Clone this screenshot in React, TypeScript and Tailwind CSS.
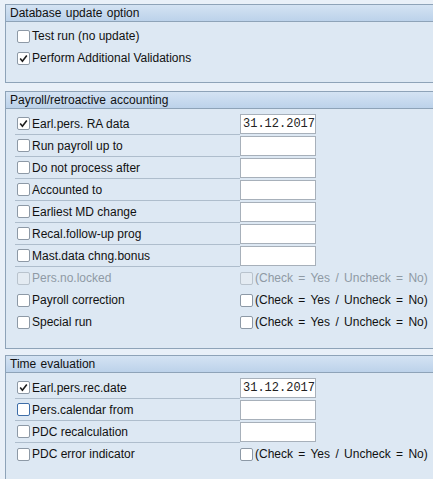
import React from 'react'

type Row = {
  label: string
  checked?: boolean
  disabled?: boolean
  focus?: boolean
  input?: string | null
  flag?: boolean
}

const Check = ({ checked, disabled, focus }: { checked?: boolean; disabled?: boolean; focus?: boolean }) => (
  <span
    className={`flex h-[13px] w-[13px] shrink-0 items-center justify-center rounded-[2px] border ${
      disabled ? 'border-[#b9c3cd] bg-[#e4ebf2]' : focus ? 'border-[#3f6ea8] bg-white' : 'border-[#8d99a6] bg-white'
    }`}
  >
    {checked && (
      <svg width="9" height="9" viewBox="0 0 9 9">
        <path d="M1.2 4.6 L3.4 7.2 L7.8 1.4" fill="none" stroke="#1d1d1d" strokeWidth="1.6" />
      </svg>
    )}
  </span>
)

const Field = ({ value }: { value: string }) => (
  <div className="h-[20px] w-[76px] border border-[#a7b0ba] bg-white pl-[2px] font-['Liberation_Mono',monospace] text-[12px] leading-[18px] text-[#222]">
    {value}
  </div>
)

const Group = ({ title, rows, pt, pb }: { title: string; rows: Row[]; pt: string; pb: string }) => (
  <div className="border-y border-l border-[#8ea3b8] bg-[#dde8f3]">
    <div className="h-[17px] border-b border-[#8ea3b8] bg-gradient-to-b from-[#d4e3f3] to-[#bcd2ea] pl-[4px] text-[12px] leading-[16px] text-[#111] [word-spacing:1px]">
      {title}
    </div>
    <div className={`${pt} ${pb}`}>
      {rows.map((r) => (
        <div key={r.label} className="flex h-[22px] items-center">
          <div
            className={`ml-[9px] flex h-[22px] w-[225px] items-center gap-[2px] pl-[2px] ${
              r.input !== undefined ? 'border-b border-[#aebdcc]' : ''
            }`}
          >
            <Check checked={r.checked} disabled={r.disabled} focus={r.focus} />
            <span className={`text-[12px] ${r.disabled ? 'text-[#8f9aa5]' : 'text-[#111]'}`}>{r.label}</span>
          </div>
          {r.input !== undefined && <Field value={r.input ?? ''} />}
          {r.flag && (
            <div className="flex items-center gap-[2px]">
              <Check disabled={r.disabled} />
              <span className={`text-[12px] [word-spacing:2px] ${r.disabled ? 'text-[#8f9aa5]' : 'text-[#111]'}`}>
                (Check = Yes / Uncheck = No)
              </span>
            </div>
          )}
        </div>
      ))}
    </div>
  </div>
)

const App = () => {
  const db: Row[] = [
    { label: 'Test run (no update)' },
    { label: 'Perform Additional Validations', checked: true },
  ]
  const payroll: Row[] = [
    { label: 'Earl.pers. RA data', checked: true, input: '31.12.2017' },
    { label: 'Run payroll up to', input: null },
    { label: 'Do not process after', input: null },
    { label: 'Accounted to', input: null },
    { label: 'Earliest MD change', input: null },
    { label: 'Recal.follow-up prog', input: null },
    { label: 'Mast.data chng.bonus', input: null },
    { label: 'Pers.no.locked', disabled: true, flag: true },
    { label: 'Payroll correction', flag: true },
    { label: 'Special run', flag: true },
  ]
  const time: Row[] = [
    { label: 'Earl.pers.rec.date', checked: true, input: '31.12.2017' },
    { label: 'Pers.calendar from', focus: true, input: null },
    { label: 'PDC recalculation', input: null },
    { label: 'PDC error indicator', flag: true },
  ]
  return (
    <div className="h-[479px] w-[433px] overflow-hidden bg-[#e9f0f8] pl-[5px] pt-[4px] font-['Liberation_Sans',Arial,sans-serif]">
      <div className="mb-[8px]">
        <Group title="Database update option" rows={db} pt="pt-[3px]" pb="pb-[13px]" />
      </div>
      <div className="mb-[6px]">
        <Group title="Payroll/retroactive accounting" rows={payroll} pt="pt-[4px]" pb="pb-[15px]" />
      </div>
      <Group title="Time evaluation" rows={time} pt="pt-[4px]" pb="pb-[30px]" />
    </div>
  )
}

export default App
